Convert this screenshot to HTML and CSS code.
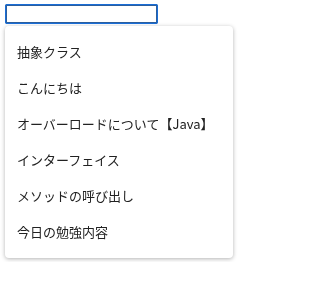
FILE: index.html
```html
<!DOCTYPE html>
<html lang="ja">
<head>
    <meta charset="UTF-8">
    <title>検索</title>
    <link rel="stylesheet" href="styles.css">
</head>
<body>
    <div class="search">
        <input class="search-input" type="text" autofocus>
        <ul class="suggest">
            <li>抽象クラス</li>
            <li>こんにちは</li>
            <li>オーバーロードについて【Java】</li>
            <li>インターフェイス</li>
            <li>メソッドの呼び出し</li>
            <li>今日の勉強内容</li>
        </ul>
    </div>
</body>
</html>
```

FILE: styles.css
```css
body {
    margin: 0;
    padding: 4px 5px;
    background-color: #fff;
    font-family: "Noto Sans CJK JP", "Noto Sans", sans-serif;
}
.search {
    width: 228px;
}
.search-input {
    display: block;
    box-sizing: border-box;
    width: 153px;
    height: 20px;
    margin: 0;
    padding: 0 3px;
    border: 2px solid #2c5f9e;
    border-radius: 2px;
    outline: 1px solid #1a6dd6;
    outline-offset: -1px;
    font-size: 13px;
    caret-color: #000;
}
.suggest {
    list-style: none;
    margin: 2px 0 0;
    padding: 8px 0;
    background-color: #fff;
    border-radius: 4px;
    box-shadow: 0 1px 4px rgba(0, 0, 0, 0.3);
}
.suggest li {
    height: 36px;
    line-height: 36px;
    padding: 0 12px;
    font-size: 13px;
    color: #222;
}
```
